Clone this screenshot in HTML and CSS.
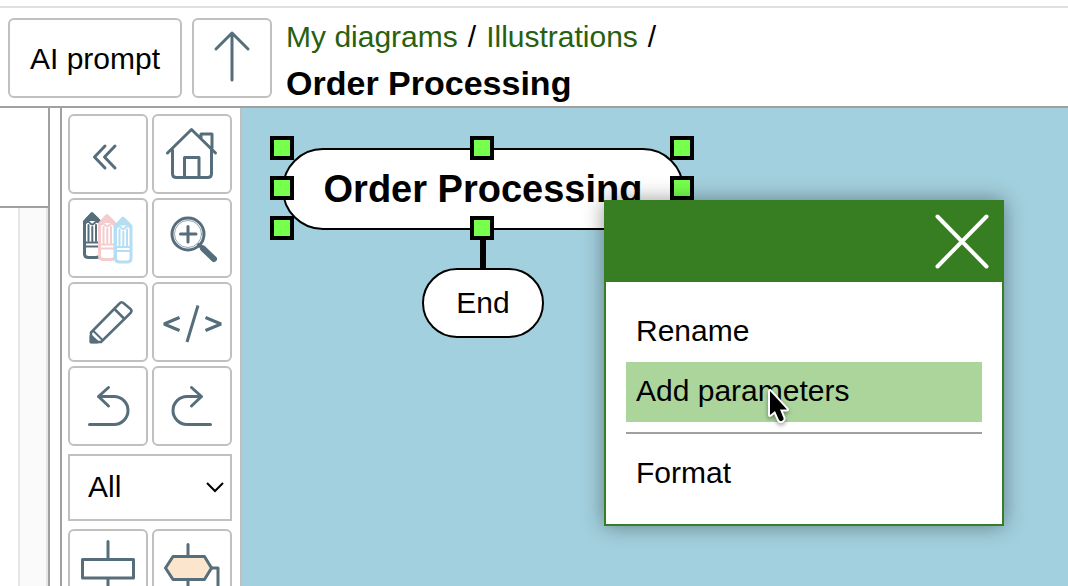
FILE: index.html
```html
<!DOCTYPE html>
<html lang="en">
<head>
<meta charset="utf-8">
<title>Order Processing</title>
<link rel="stylesheet" href="styles.css">
</head>
<body>
<header class="topbar">
  <button class="btn prompt" type="button">AI prompt</button>
  <button class="btn tool" type="button" aria-label="Up"><svg viewBox="2 2 76 76"><path d="M24 31 40 15 56 31M40 15V62"/></svg></button>
  <div class="location">
    <nav class="crumbs"><a href="#">My diagrams</a><span>/</span><a href="#">Illustrations</a><span>/</span></nav>
    <h1 class="title">Order Processing</h1>
  </div>
</header>
<main class="workspace">
  <aside class="side">
    <div class="side-top"></div>
    <div class="side-scroll"><div class="scroll-track"></div></div>
  </aside>
  <section class="toolbar">
    <div class="tools">
      <button class="btn tool" type="button" aria-label="Collapse"><svg viewBox="2 2 76 76"><path d="M37 32 26.500 43 37 54M47 32 36.500 43 47 54"/></svg></button>
      <button class="btn tool" type="button" aria-label="Home"><svg viewBox="2 2 76 76"><path d="M15.500 39 39.500 15.500 63.500 39M20.500 36V59.500Q20.500 63.500 24.500 63.500H55.500Q59.500 63.500 59.500 59.500V36M32.500 63V43.500H47V63M49 24V20H60V34"/></svg></button>
      <button class="btn tool" type="button" aria-label="Colors"><svg viewBox="2 2 76 76">
        <defs><g id="crayon"><path d="M16.500 23.500 24 16 32 23.500V56Q32 59.500 28 59.500H20.500Q16.500 59.500 16.500 56Z" fill="#fff" stroke-width="3"/><path d="M18.500 21.500 24 15.500 30 21.500Z" fill="currentColor"/><path d="M17 26Q20 22 22 25Q24.300 28 26.500 25Q29 22 32 26M17 44.500H32M17 48.500H32" stroke-width="2"/><path d="M20.500 27V43M24.300 29V43M28 27V43" stroke-width="2"/></g></defs>
        <use href="#crayon"/><use href="#crayon" x="15" y="2" color="#f4cccc"/><use href="#crayon" x="31" y="4.500" color="#b4def4"/></svg></button>
      <button class="btn tool" type="button" aria-label="Zoom in"><svg viewBox="2 2 76 76"><circle cx="36" cy="36" r="16"/><circle cx="36" cy="36" r="13.500" stroke-width="1" opacity=".6"/><path d="M28.500 36H44M36 28.500V44"/><path d="M47 47 51 50" stroke-width="4"/><path d="M51 50.500 62 61" stroke-width="6"/></svg></button>
      <button class="btn tool" type="button" aria-label="Edit"><svg viewBox="2 2 76 76"><path d="M23 60V50.500L51.500 21.500Q53.500 19 56 21.500L62.500 27Q64.500 29 62.500 31L33 60ZM46.500 27 56 36.500" stroke-width="2.500"/><path d="M26 49.500 34 57.500" stroke-width="2"/><path d="M23 54 29.500 60H23Z" fill="currentColor"/></svg></button>
      <button class="btn tool" type="button" aria-label="Source"><svg viewBox="2 2 76 76"><path class="flat" d="M27.500 35.500 12 42 27.500 48.500M53.500 35.500 69 42 53.500 48.500M46 23.500 35 60"/></svg></button>
      <button class="btn tool" type="button" aria-label="Undo"><svg viewBox="2 2 76 76"><path d="M40.500 21.500 30.500 30.500 40.500 40M30.500 30.500H46A14 14 0 0 1 46 58.500H21.500"/></svg></button>
      <button class="btn tool" type="button" aria-label="Redo"><svg viewBox="2 2 76 76"><path d="M39.500 21.500 49.500 30.500 39.500 40M49.500 30.500H35A14 14 0 0 0 35 58.500H58.500"/></svg></button>
    </div>
    <label class="filter">
      <select aria-label="Shape category"><option>All</option></select>
      <svg class="chevron" viewBox="0 0 20 12"><path d="M2 2 10 10 18 2"/></svg>
    </label>
    <div class="tools">
      <button class="btn tool" type="button" aria-label="Action"><svg viewBox="2 2 76 76"><path d="M40 12.500V29M14.500 30.500H65.500V49H14.500ZM40 49V66"/></svg></button>
      <button class="btn tool" type="button" aria-label="Loop"><svg viewBox="2 2 76 76"><path d="M36 15.500V27M36 51V66M59.500 39H66V66"/><path d="M13.500 39 21 27.500H52.500L59.500 39 52.500 50.500H21Z" fill="#fce5cd"/></svg></button>
    </div>
  </section>
  <section class="canvas">
    <div class="link"></div>
    <div class="node start">Order Processing</div>
    <div class="node end">End</div>
    <i class="handle left top"></i><i class="handle center top"></i><i class="handle right top"></i>
    <i class="handle left middle"></i><i class="handle right middle"></i>
    <i class="handle left bottom"></i><i class="handle center bottom"></i>
    <div class="menu">
      <div class="menu-head"><button class="close" type="button" aria-label="Close"><svg viewBox="0 0 80 80"><path d="M15.500 14.500 64.500 64.500M64.500 14.500 15.500 64.500"/></svg></button></div>
      <div class="menu-body">
        <button class="item" type="button">Rename</button>
        <button class="item active" type="button">Add parameters<svg class="cursor" viewBox="0 0 30 40"><path class="halo" d="M4 4V28L9 24 13 33Q14.500 35 16.500 33.500Q18 32.500 17.500 31L14 22.500H21Z"/><path d="M4 4V28L9 24 13 33Q14.500 35 16.500 33.500Q18 32.500 17.500 31L14 22.500H21Z"/></svg></button>
        <hr class="rule">
        <button class="item" type="button">Format</button>
      </div>
    </div>
  </section>
</main>
</body>
</html>
```
FILE: styles.css
```css
* { box-sizing: border-box; }
body {
  margin: 0;
  height: 100vh;
  display: flex;
  flex-direction: column;
  overflow: hidden;
  background: #fff;
  color: #000;
  font: 30px/46px "Liberation Sans", Arial, sans-serif;
}
button, select { font: inherit; color: inherit; }
.topbar {
  display: flex;
  gap: 10px;
  margin-top: 6px;
  padding: 0 8px;
  border-top: 2px solid #e0e0e0;
  border-bottom: 2px solid #a0a0a0;
}
.btn {
  height: 80px;
  padding: 0;
  border: 2px solid #c0c0c0;
  border-radius: 6px;
  background: #fff;
}
.topbar .btn { margin-top: 10px; }
.prompt { padding: 2px 20px 0; }
.tool { width: 80px; color: #566e7b; }
.tool svg {
  display: block;
  width: 76px;
  height: 76px;
  fill: none;
  stroke: currentColor;
  stroke-width: 3;
  stroke-linecap: round;
  stroke-linejoin: round;
}
.tool .flat { stroke-linecap: butt; stroke-linejoin: bevel; }
.location { padding: 6px 0 0 4px; }
.crumbs { display: flex; gap: 10px; }
.crumbs a { color: #28600f; text-decoration: none; }
.title { margin: 0; font-size: 34px; line-height: 46px; }
.workspace { flex: 1; min-height: 0; display: flex; }
.side {
  width: 50px;
  display: flex;
  flex-direction: column;
  border-right: 2px solid #a0a0a0;
}
.side-top { height: 100px; border-bottom: 2px solid #a0a0a0; }
.side-scroll { flex: 1; display: flex; justify-content: flex-end; }
.scroll-track { width: 30px; border: solid #e6e6e6; border-width: 0 2px; background: #fafafa; }
.toolbar {
  width: 182px;
  margin-left: 10px;
  padding: 6px;
  border-left: 2px solid #a0a0a0;
  border-right: 2px solid #c0c0c0;
  overflow: hidden;
}
.tools { display: grid; grid-template-columns: 80px 80px; gap: 4px; }
.filter { display: block; position: relative; width: 164px; margin: 8px 0; }
.filter select {
  display: block;
  width: 100%;
  height: 67px;
  padding: 0 18px 2px;
  appearance: none;
  border: 2px solid #c0c0c0;
  border-radius: 0;
  background: #fff;
}
.chevron {
  position: absolute;
  right: 7px;
  top: 27px;
  width: 20px;
  height: 12px;
  fill: none;
  stroke: #000;
  stroke-width: 2;
  pointer-events: none;
}
.canvas { flex: 1; position: relative; overflow: hidden; background: #a3d0de; }
.node {
  position: absolute;
  display: flex;
  align-items: center;
  justify-content: center;
  border: 2px solid #000;
  border-radius: 41px;
  background: #fff;
}
.start { left: 40px; top: 40px; width: 402px; height: 82px; font-size: 38px; font-weight: bold; }
.end { left: 180px; top: 160px; width: 122px; height: 70px; }
.link { position: absolute; left: 238px; top: 122px; width: 6px; height: 40px; background: #000; }
.handle { position: absolute; width: 24px; height: 24px; border: 4px solid #000; background: #77ff4d; }
.left { left: 28px; }
.center { left: 228px; }
.right { left: 428px; }
.top { top: 28px; }
.middle { top: 68px; }
.bottom { top: 108px; }
.menu {
  position: absolute;
  left: 362px;
  top: 92px;
  width: 400px;
  border: 2px solid #377d22;
  background: #fff;
  box-shadow: 0 0 20px rgba(0, 0, 0, 0.4);
}
.menu-head { display: flex; justify-content: flex-end; background: #377d22; }
.close { width: 80px; height: 80px; padding: 0; border: 0; background: none; }
.close svg { display: block; fill: none; stroke: #fff; stroke-width: 4; stroke-linecap: round; }
.menu-body { padding: 20px; }
.item {
  display: block;
  position: relative;
  width: 100%;
  height: 60px;
  padding: 0 10px 2px;
  border: 0;
  background: none;
  text-align: left;
}
.active { background: #abd59b; }
.rule { height: 2px; margin: 10px 0; border: 0; background: #a0a0a0; }
.cursor {
  position: absolute;
  left: 140px;
  top: 25px;
  width: 30px;
  height: 40px;
  overflow: visible;
  filter: drop-shadow(0 2px 2px rgba(0, 0, 0, 0.4));
}
.halo { fill: #fff; stroke: #fff; stroke-width: 4; stroke-linejoin: round; }
```
